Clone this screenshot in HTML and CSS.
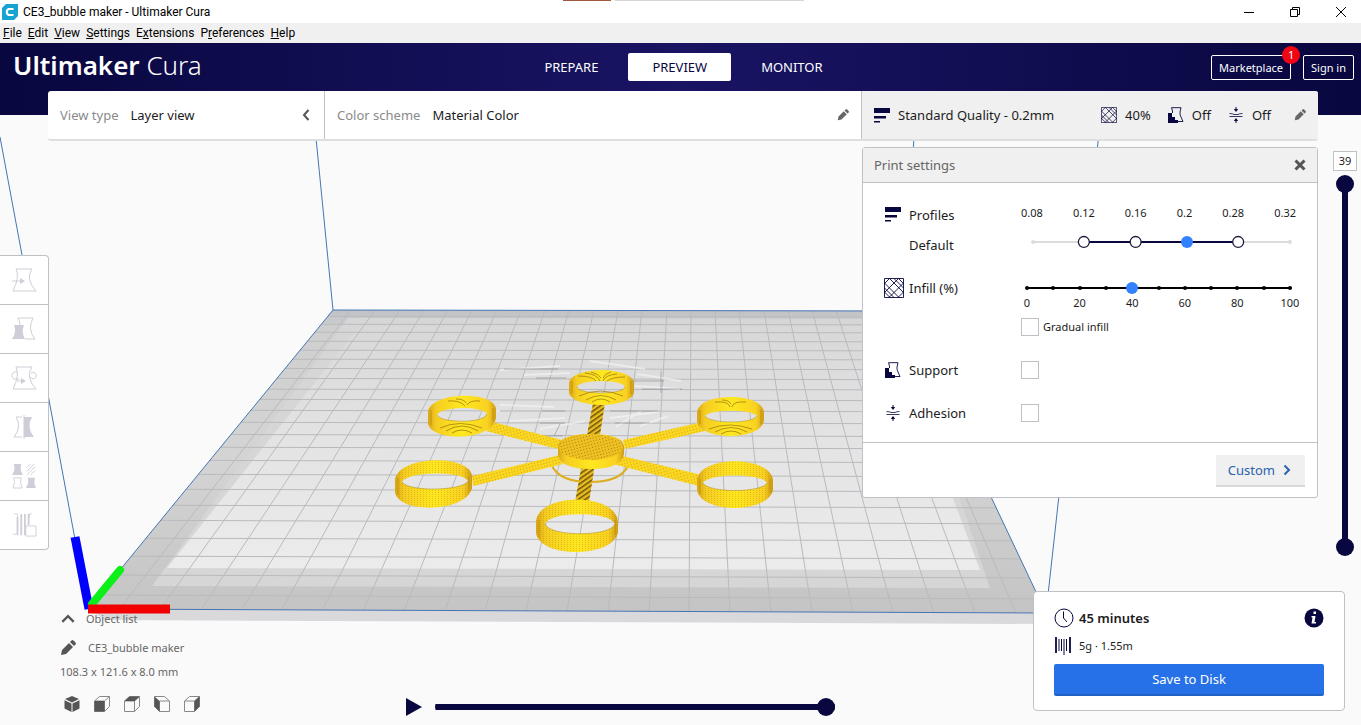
FILE: index.html
```html
<!DOCTYPE html>
<html lang="en">
<head>
<meta charset="utf-8">
<title>CE3_bubble maker - Ultimaker Cura</title>
<link rel="stylesheet" href="styles.css">
</head>
<body>
<svg class="defs" width="0" height="0" aria-hidden="true">
  <symbol id="pencil" viewBox="0 0 16 16"><path d="M1 15l1-5 7-7 4 4-7 7zM10 2l1.500-1.500q1-.8 2 0l2 2q.8 1 0 2L14 6z"/></symbol>
  <symbol id="layers" viewBox="0 0 16 16"><path d="M0 1h16v5H0zM0 9h12v2.500H0zM0 14h6v1.500H0z"/></symbol>
  <symbol id="infill" viewBox="0 0 20 20"><path fill="none" stroke="currentColor" stroke-width=".9" d="M.5.5h19v19H.5zM.5 5L15 19.500M.5 14L6 19.500M5.500.5l14 14M14.500.5l5 5M.5 10L10 19.500M10 .5l9.500 9.500M5.500.5l-5 5M14.500.5l-14 14M19.500 5L5 19.500M19.500 14L14 19.500"/></symbol>
  <symbol id="support" viewBox="0 0 16 16"><path d="M0 6h4v4h3v3h3v3H0z"/><path fill="none" stroke="currentColor" stroke-width=".9" d="M4.500 6V4L3.500.7h9.500l-1 4.300q-.3 3 1 5l2 4.500H10"/></symbol>
  <symbol id="adhesion" viewBox="0 0 16 16"><path d="M7.500 0h1v2h1.700L8 5 5.800 2h1.700zM7.500 16h1v-2h1.700L8 11l-2.200 3h1.700z"/><path fill="none" stroke="currentColor" stroke-width=".8" d="M1.500 6.500q3 0 4.500 1h4q1.500-1 4.500-1M1.500 9.500h13"/></symbol>
</svg>
<div class="app">
  <header class="titlebar">
    <svg class="app-icon" viewBox="0 0 16 16"><path fill="#16a3d2" d="M4 0h12v12l-4 4H0V4z"/><path fill="none" stroke="#fff" stroke-width="2.200" d="M11.500 5H6.500L5 6.500v3L6.500 11h5"/></svg>
    <h1 class="window-title">CE3_bubble maker - Ultimaker Cura</h1>
    <span class="tab-strip"><i class="strip-warm"></i><i class="strip-grey"></i></span>
    <div class="window-buttons">
      <button aria-label="Minimize"><svg viewBox="0 0 12 12"><path d="M1 6.500h10"/></svg></button>
      <button aria-label="Restore"><svg viewBox="0 0 12 12"><path d="M1.500 3.500h7v7h-7zM3.500 3V1.500h7v7H9"/></svg></button>
      <button aria-label="Close"><svg viewBox="0 0 12 12"><path d="M1 1l10 10M11 1L1 11"/></svg></button>
    </div>
  </header>
  <nav class="menubar">
    <button><u>F</u>ile</button><button><u>E</u>dit</button><button><u>V</u>iew</button><button><u>S</u>ettings</button><button>E<u>x</u>tensions</button><button>P<u>r</u>eferences</button><button><u>H</u>elp</button>
  </nav>

  <main class="workspace">
    <svg class="scene" viewBox="0 43 1361 682" preserveAspectRatio="xMidYMin slice" role="img" aria-label="Build plate with sliced model">
      <defs>
        <clipPath id="plate"><path d="M333 310L903 311L1046 613L88 609z"/></clipPath>
        <linearGradient id="inner" x1="0" y1="0" x2="0" y2="1"><stop offset="0" stop-color="#d8d8d9"/><stop offset=".45" stop-color="#e3e3e4"/><stop offset="1" stop-color="#ececec"/></linearGradient>
        <linearGradient id="outer" x1="0" y1="0" x2="0" y2="1"><stop offset="0" stop-color="#bfc2c6"/><stop offset=".06" stop-color="#cfcfd0"/><stop offset=".5" stop-color="#d4d4d5"/><stop offset="1" stop-color="#c4c4c4"/></linearGradient>
        <linearGradient id="wall"><stop offset="0" stop-color="#d9a514"/><stop offset=".12" stop-color="#f5cd22"/><stop offset=".5" stop-color="#ffe81f"/><stop offset=".88" stop-color="#f9d122"/><stop offset="1" stop-color="#cf9b16"/></linearGradient>
        <pattern id="fine" width="3" height="2" patternUnits="userSpaceOnUse"><path fill="#c08c08" d="M0 0h1v1H0z"/></pattern>
        <pattern id="dots" width="3" height="3" patternUnits="userSpaceOnUse" patternTransform="rotate(-15)"><path fill="#8d6608" d="M0 0h1v1H0z"/></pattern>
        <pattern id="rope" width="6" height="4" patternUnits="userSpaceOnUse" patternTransform="rotate(-35)"><path fill="#6b5208" d="M0 0h6v1.500H0z"/></pattern>
      </defs>
      <path fill="#d9d9dc" d="M88 609L1046 613V624L105 620z"/>
      <path fill="url(#outer)" d="M333 310L903 311L1046 613L88 609z"/>
      <path fill="#d6d6d7" d="M348 318L899 319L990 588L152 586z"/>
      <path fill="url(#inner)" d="M360 326L888 326L980 570L167 568z"/>
      <g clip-path="url(#plate)" fill="none" stroke="#b9babd">
        <path d="M351 310L118 611M375 310L159 611M400 310L200 611M424 310L241 611M448 310L281 611M472 310L322 611M497 310L363 611M521 310L404 611M545 310L445 611M569 310L485 611M594 310L526 611M618 310L567 611M642 310L608 611M667 310L649 612M691 310L689 612M715 310L730 612M739 310L771 612M764 310L812 612M788 310L853 612M812 310L893 613M836 310L934 613M861 310L975 613M885 310L1016 613"/>
        <path d="M80 316L1060 317M80 324L1060 325M80 332L1060 333M80 341L1060 342M80 350L1060 351M80 359L1060 360M80 368L1060 370M80 378L1060 380M80 389L1060 390M80 399L1060 401M80 410L1060 412M80 422L1060 424M80 434L1060 437M80 447L1060 449M80 460L1060 463M80 474L1060 477M80 489L1060 492M80 505L1060 508M80 520L1060 524M80 538L1060 541M80 556L1060 559M80 575L1060 578M80 595L1060 599"/>
      </g>
      <path fill="none" stroke="#4675b3" d="M333 310L88 609L1046 613L903 311zM333 310L316 138M903 311L914 138M1046 613L1101 115M88 609L0 137"/>
      <g fill="none" stroke="#f4f4f5" stroke-width="2" opacity=".65"><path d="M500 370l60-4M524 375l46-2M590 361l55 8M637 374l44 7M635 386l45 3M494 411l48 0M510 421l55-3M540 429l45-8M610 418l48-6M616 427l25-16M640 426l28-10M500 405l54 2"/></g>
      <g fill="none" stroke="#85898e" stroke-width=".6"><path d="M504 369h54M536 378h30M632 381h32M642 389h40M500 411h65M610 411h48M540 423h25M615 423h35M661 371v22M560 424l-6 12M510 436h53"/></g>
      <g fill="none" stroke-width="8"><path stroke="#00f" stroke-width="9" d="M75 537L89 609"/><path stroke="#0cf01a" stroke-linecap="round" d="M92 604L120 570"/><path stroke="#f20000" stroke-width="9" d="M88 609H170"/></g>

      <g class="model">
        <path fill="none" stroke="#dcae1b" stroke-width="2" d="M552 466Q560 482 590 482T628 466"/>
        <path fill="#fbd722" d="M493 422L562 440L558 449L486 431zM623 440L698 423L705 431L625 449zM560 455L472 476L473 486L563 464zM618 455L698 474L699 486L613 464z"/>
        <path fill="url(#dots)" opacity=".45" d="M493 422L562 440L558 449L486 431zM623 440L698 423L705 431L625 449zM560 455L472 476L473 486L563 464zM618 455L698 474L699 486L613 464z"/>
        <path fill="#e8bc22" d="M593 403L605 402L600 435L587 435zM582 463L595 463L589 502L575 502z"/>
        <path fill="url(#rope)" d="M593 403L605 402L600 435L587 435zM582 463L595 463L589 502L575 502z"/>
        <path fill="url(#wall)" d="M558 446Q560 434 591 434T624 446V454Q621 469 591 469T558 455z"/>
        <ellipse cx="591" cy="447" rx="32" ry="13" fill="#efc022"/><ellipse cx="591" cy="447" rx="32" ry="13" fill="url(#dots)" opacity=".75"/>
        <g fill-rule="evenodd" fill="url(#wall)">
          <path d="M569 383A32.500 13 0 0 1 634 383V392A32.500 13 0 0 1 569 392zM577 387a24 6 0 0 0 48 0a24 6 0 0 0-48 0z"/>
          <path d="M428 412C430 392 494 390 496 409V418C492 442 430 442 428 423zM437 415C440 423 484 424 487 414C482 406 442 406 437 415z"/>
          <path d="M697 412C700 392 762 392 764 412V421C760 441 700 441 697 421zM705 416C710 424 752 424 757 416C752 409 710 409 705 416z"/>
          <path d="M395 480C398 455 470 454 472 476V488C466 513 398 514 395 492zM402 482C408 492 463 491 468 481C463 471 408 471 402 482z"/>
          <path d="M697 480C700 455 770 455 773 480V490C768 514 701 514 697 490zM703 483C708 493 762 493 767 483C762 473 708 473 703 483z"/>
          <path d="M536 522C538 492 616 492 618 522V532C614 558 540 559 536 533zM545 524C550 537 610 537 615 524C610 511 550 511 545 524z"/>
        </g>
        <path fill="none" stroke="#b98a12" d="M572 381v13M631 381v13M431 410v15M493 408v13M700 410v14M761 410v14M398 478v17M469 476v15M700 479v15M770 479v14M539 520v17M615 520v15" opacity=".8"/>
        <g fill="none" stroke="#a8891c" stroke-width=".5"><path d="M577 387a24 6 0 0 0 48 0M437 415C440 423 484 424 487 414M705 416C710 424 752 424 757 416M402 482C408 492 463 491 468 481M703 483C708 493 762 493 767 483M545 524C550 537 610 537 615 524"/></g>
        <path fill="url(#fine)" opacity=".4" fill-rule="evenodd" d="M395 480C398 455 470 454 472 476V488C466 513 398 514 395 492zM402 482C408 492 463 491 468 481C463 471 408 471 402 482zM697 480C700 455 770 455 773 480V490C768 514 701 514 697 490zM703 483C708 493 762 493 767 483C762 473 708 473 703 483zM536 522C538 492 616 492 618 522V532C614 558 540 559 536 533zM545 524C550 537 610 537 615 524C610 511 550 511 545 524z"/>
        <g fill="none" stroke="#947110" stroke-width=".7"><path d="M585 373q12 1 15 8M591 372q8 2 10 6M617 374q-12 1-14 7M611 372q-7 2-8 6M586 400q15-9 30 0M592 402q9-6 18 0M448 401q12-1 17 5M456 399q8 0 10 4M480 401q-10-1-13 4M446 431q16-10 32 0M452 433q10-6 20 0M715 402q14-1 15 5M746 402q-13-1-14 5M722 400q7 0 9 4M715 432q16-9 32 0M721 434q10-6 20 0M578 376q14 0 18 5M625 377q-13 0-18 4M579 396q21-10 44 0M440 428q20-9 42 0M709 429q20-8 43 0"/></g>
      </g>
    </svg>

    <header class="brandbar">
      <div class="brand"><strong>Ultimaker</strong> Cura</div>
      <nav class="stages"><button>PREPARE</button><button class="active">PREVIEW</button><button>MONITOR</button></nav>
      <div class="account"><button>Marketplace<span class="badge">1</span></button><button>Sign in</button></div>
    </header>

    <section class="stagebar">
      <button class="stage-item view-type"><span class="muted">View type</span><span>Layer view</span><svg class="end chevron" viewBox="0 0 8 12"><path d="M6.500 1L2 6l4.500 5"/></svg></button>
      <button class="stage-item scheme"><span class="muted">Color scheme</span><span>Material Color</span><svg class="end pen"><use href="#pencil"/></svg></button>
      <button class="stage-item quality"><svg class="ico"><use href="#layers"/></svg><span class="quality-name">Standard Quality - 0.2mm</span><svg class="ico"><use href="#infill"/></svg><span>40%</span><svg class="ico gap-before"><use href="#support"/></svg><span>Off</span><svg class="ico gap-before"><use href="#adhesion"/></svg><span>Off</span><svg class="end pen"><use href="#pencil"/></svg></button>
    </section>

    <div class="upper">
      <div class="tools">
        <button aria-label="Move"><svg viewBox="0 0 24 24"><path d="M4 1h16q-7 10 4 22H1Q8 9 4 1zM0 13h11"/><path class="solid" d="M8 10l5 3-5 3z"/></svg></button>
        <button aria-label="Scale"><svg viewBox="0 0 24 24"><path d="M6 1h15q-6 11 2 21H13M6 1q2 4 2 7"/><path class="solid" d="M2 8h10q-3 7 1 14H0q5-7 2-14z"/></svg></button>
        <button aria-label="Rotate"><svg viewBox="0 0 24 24"><path d="M4 1h16q-7 10 4 22H1Q8 9 4 1zM7 13H2q-4-3-1-6 3-3 5 0M19 7q3-2 5 1 1 4-3 5l-3-2M5 15h7"/><path class="solid" d="M9 12l5 3-5 3z"/></svg></button>
        <button aria-label="Mirror"><svg viewBox="0 0 24 24"><path d="M12 0v24M10 2H4q6 10-2 20h8"/><path class="solid" d="M12 2h8q-6 10 2 20H12z"/></svg></button>
        <button aria-label="Per model settings"><svg viewBox="0 0 26 26"><path class="solid" d="M2 0h8q-2 6 2 12H0q4-6 2-12zM17 15h8q-2 5 1 11H15q4-6 2-11z"/><path d="M2 15h8q-2 5 1 11H1q3-6 1-11zM16 4l4-4M16 8l8-8M16 12l9-9M20 12l5-5"/></svg></button>
        <button aria-label="Support blocker"><svg viewBox="0 0 26 26"><path stroke-width="2" d="M6 4v20M10 1v23M14 1v23M18 1v12"/><path d="M2 1h4v3M22 1h-3v4M1 23h4M15 14h11v11H15z"/></svg></button>
      </div>

      <section class="settings" aria-label="Print settings">
        <header class="settings-head"><h2>Print settings</h2><button aria-label="Close settings"><svg viewBox="0 0 12 12"><path d="M1.500 1.500l9 9M10.500 1.500l-9 9"/></svg></button></header>
        <div class="settings-body">
          <div class="row">
            <svg class="ico"><use href="#layers"/></svg>
            <div class="labels"><label for="profile">Profiles</label><span>Default</span></div>
            <div class="control">
              <div class="values"><span>0.08</span><span>0.12</span><span>0.16</span><span>0.2</span><span>0.28</span><span>0.32</span></div>
              <div class="range profile-range">
                <svg viewBox="0 0 270 18"><path stroke="#dcdcdc" stroke-width="2" d="M6 9H264"/><path stroke="#08073f" stroke-width="2" d="M57 9H212"/><g fill="#dcdcdc"><circle cx="6" cy="9" r="2"/><circle cx="264" cy="9" r="2"/></g><g fill="#fff" stroke="#1c1b3d" stroke-width="1.300"><circle cx="57" cy="9" r="5.500"/><circle cx="109" cy="9" r="5.500"/><circle cx="212" cy="9" r="5.500"/></g></svg>
                <input id="profile" type="range" min="0" max="5" value="3">
              </div>
            </div>
          </div>
          <div class="row infill-row">
            <svg class="ico large"><use href="#infill"/></svg>
            <div class="labels"><label for="infill-amount">Infill (%)</label></div>
            <div class="control">
              <div class="range infill-range">
                <svg viewBox="0 0 275 18"><path stroke="#000" stroke-width="2" d="M6 9H269"/><g fill="#000"><circle cx="6" cy="9" r="2"/><circle cx="32" cy="9" r="2"/><circle cx="59" cy="9" r="2"/><circle cx="85" cy="9" r="2"/><circle cx="138" cy="9" r="2"/><circle cx="164" cy="9" r="2"/><circle cx="190" cy="9" r="2"/><circle cx="216" cy="9" r="2"/><circle cx="243" cy="9" r="2"/><circle cx="269" cy="9" r="2"/></g></svg>
                <input id="infill-amount" type="range" min="0" max="100" step="10" value="40">
              </div>
              <div class="values percents"><span>0</span><span>20</span><span>40</span><span>60</span><span>80</span><span>100</span></div>
              <label class="gradual"><input type="checkbox">Gradual infill</label>
            </div>
          </div>
          <div class="row single"><svg class="ico"><use href="#support"/></svg><label class="labels" for="support-on">Support</label><input id="support-on" type="checkbox"></div>
          <div class="row single"><svg class="ico"><use href="#adhesion"/></svg><label class="labels" for="adhesion-on">Adhesion</label><input id="adhesion-on" type="checkbox"></div>
        </div>
        <footer class="settings-foot"><button>Custom<svg viewBox="0 0 8 12"><path d="M1.500 1.500L6 6l-4.500 4.500"/></svg></button></footer>
      </section>

      <div class="layer-slider">
        <output class="layer-number">39</output>
        <div class="layer-track">
          <input type="range" min="0" max="39" value="39" aria-label="Upper layer">
          <input type="range" min="0" max="39" value="0" aria-label="Lower layer">
        </div>
      </div>
    </div>

    <div class="lower">
      <section class="object-info">
        <button class="object-line"><svg class="up" viewBox="0 0 14 14"><path d="M2 9.500l5-5 5 5"/></svg>Object list</button>
        <button class="object-line name"><svg><use href="#pencil"/></svg>CE3_bubble maker</button>
        <p>108.3 x 121.6 x 8.0 mm</p>
        <div class="views">
          <button aria-label="3D view"><svg viewBox="0 0 16 16"><path class="full" d="M8 0l7 3-7 3.500L1 3zM.5 4.200L7.500 7.500V16l-7-3.500zM15.500 4.200L8.500 7.500V16l7-3.500z"/></svg></button>
          <button aria-label="Front view"><svg viewBox="0 0 16 16"><path d="M.5 5l5-4.500h10v10l-5 5H.5zM.5 5h10v10.500M10.500 5l5-4.500"/><path class="full" d="M.5 5h10v10.500H.5z"/></svg></button>
          <button aria-label="Top view"><svg viewBox="0 0 16 16"><path d="M.5 5l5-4.500h10v10l-5 5H.5zM.5 5h10v10.500M10.500 5l5-4.500"/><path class="full" d="M.5 5l5-4.500h10l-5 4.500z"/></svg></button>
          <button aria-label="Left view"><svg viewBox="0 0 16 16"><path d="M.5.5h10l5 4.500v10.500h-10l-5-5zM5.500 5h10M5.500 5v10.500"/><path class="full" d="M.5.5l5 4.500v10.500l-5-5z"/></svg></button>
          <button aria-label="Right view"><svg viewBox="0 0 16 16"><path d="M.5 5l5-4.500h10v10l-5 5H.5zM.5 5h10v10.500M10.500 5l5-4.500"/><path class="full" d="M10.500 5l5-4.500v10l-5 5z"/></svg></button>
        </div>
      </section>
      <div class="player"><button aria-label="Play"><svg viewBox="0 0 16 18"><path d="M0 0l16 9-16 9z"/></svg></button><input type="range" min="0" max="100" value="100" aria-label="Simulation progress"></div>
      <section class="output-card">
        <div class="estimate"><svg viewBox="0 0 20 20"><circle cx="10" cy="10" r="9"/><path d="M9.500 3.500V10l3.500 4"/></svg><strong>45 minutes</strong><button aria-label="Print details"><svg viewBox="0 0 20 20"><circle cx="10" cy="10" r="9.500"/><path fill="#fff" d="M9.500 3.500h2.500v2.500H9.500zM7.500 8h4l-1 6h1.500v1.500H7.500L8.500 9.500h-1z"/></svg></button></div>
        <div class="material"><svg viewBox="0 0 16 18"><path stroke-width="1.800" d="M1 0v16M15 0v16"/><path d="M4 2v12M6.500 2v12M9 2v16M11.500 2v12"/></svg>5g · 1.55m</div>
        <button class="save">Save to Disk</button>
      </section>
    </div>
  </main>
</div>
</body>
</html>
```
FILE: styles.css
```css
* { box-sizing: border-box; }
html, body { height: 100%; }
body { margin: 0; font: 13px/20px "Noto Sans", sans-serif; color: #1c1c1c; }
button { font: inherit; color: inherit; background: none; border: 0; padding: 0; margin: 0; cursor: pointer; }
input { margin: 0; }
h1, h2, p { margin: 0; font: inherit; }
svg { display: block; flex: none; }
.defs { position: absolute; }
.app { min-height: 100%; display: flex; flex-direction: column; background: #fafafa; }

/* Window frame */
.titlebar { position: relative; height: 23px; display: flex; align-items: center; padding-left: 2px; background: #fff; color: #000; font: 12px/16px Roboto, "Noto Sans", sans-serif; overflow: hidden; }
.app-icon { width: 16px; height: 16px; margin-right: 5px; }
.window-buttons { margin: 0 -3px 0 auto; display: flex; }
.window-buttons button { width: 46px; height: 21px; display: grid; place-items: center; }
.window-buttons svg { width: 12px; height: 12px; fill: none; stroke: #000; }
.tab-strip { position: absolute; top: 0; left: 563px; display: flex; gap: 4px; }
.tab-strip i { height: 1px; }
.strip-warm { width: 48px; background: #a0583c; }
.strip-grey { width: 189px; background: #d6d6d6; }
.menubar { height: 20px; display: flex; gap: 6px; padding-left: 3px; background: #f0f0f0; color: #000; font: 12px/20px Roboto, "Noto Sans", sans-serif; }

/* Brand header */
.workspace { position: relative; flex: 1; display: flex; flex-direction: column; overflow: hidden; }
.scene { position: absolute; inset: 0; width: 100%; height: 100%; }
.brandbar { position: relative; height: 72px; display: grid; grid-template-columns: 1fr auto 1fr; align-items: start; padding: 10px 7px 0 13px; color: #fff; background: linear-gradient(90deg, #08073f, #191463 50%, #08073f); }
.brand { font-size: 26px; line-height: 24px; font-weight: 300; }
.brand strong { font-weight: 600; }
.stages { display: flex; gap: 6px; }
.stages button { height: 28px; padding: 0 24px; border-radius: 2px; }
.stages .active { background: #fff; color: #08073f; }
.account { display: flex; justify-content: flex-end; gap: 12px; margin-top: 2px; font-size: 11px; }
.account button { position: relative; height: 25px; padding: 0 7px; border: 1px solid #fff; border-radius: 2px; }
.badge { position: absolute; right: -10px; top: -10px; width: 18px; height: 18px; border-radius: 9px; background: #f00514; font-size: 11px; line-height: 18px; }

/* Stage bar */
.stagebar { position: relative; display: flex; height: 50px; margin: -24px 43px 0 48px; background: #fff; border-bottom: 2px solid #dedede; border-radius: 3px; overflow: hidden; }
.stage-item { display: flex; align-items: center; gap: 12px; padding: 0 12px; text-align: left; }
.view-type { width: 277px; border-right: 1px solid #c0c1c6; }
.scheme { flex: 1; }
.quality { width: 457px; gap: 8px; background: #f0f0f0; border-left: 1px solid #c0c1c6; }
.muted { color: #8a8a8a; }
.end { margin-left: auto; }
.pen { width: 12px; height: 12px; fill: #666; }
.chevron { width: 8px; height: 12px; margin-right: 2px; fill: none; stroke: #555; stroke-width: 2; }
.ico { width: 16px; height: 16px; fill: #08073f; color: #08073f; }
.ico.large { width: 20px; height: 20px; }
.quality-name { margin-right: auto; }
.gap-before { margin-left: 9px; }
.quality .end { margin-left: 15px; }

/* Tools, settings, layer slider */
.upper { position: relative; flex: 1; display: flex; align-items: flex-start; padding-right: 4px; }
.tools { width: 49px; margin: 114px auto 0 0; background: #fff; border: 1px solid #c0c1c6; border-left: 0; border-radius: 0 4px 4px 0; }
.tools button { width: 100%; height: 49px; display: grid; place-items: center; border-bottom: 1px solid #c0c1c6; }
.tools button:last-child { height: 48px; border-bottom: 0; }
.tools svg { width: 24px; height: 24px; fill: none; stroke: #cfced8; overflow: visible; }
.tools .solid { fill: #cfced8; stroke: none; }
.settings { width: 456px; margin-top: 6px; background: #fff; border: 1px solid #c0c1c6; border-radius: 3px; }
.settings-head { height: 35px; display: flex; align-items: center; justify-content: space-between; padding: 0 11px; background: #f0f0f0; border-bottom: 1px solid #c0c1c6; color: #666; }
.settings-head svg { width: 12px; height: 12px; fill: none; stroke: #555; stroke-width: 3; }
.settings-body { display: flex; flex-direction: column; gap: 19px; padding: 20px 21px 17px; }
.row { display: grid; grid-template-columns: 25px 112px 1fr; align-items: start; }
.row > .ico { margin: 3px 0 0 1px; }
.row > .ico.large { margin: 2px 0 0; }
.labels { display: grid; gap: 6px; line-height: 24px; }
.values { display: flex; justify-content: space-between; font-size: 11px; line-height: 20px; }
.range { display: grid; align-items: center; height: 18px; }
.range > * { grid-area: 1 / 1; width: 100%; }
.profile-range { margin: 10px 0 0 6px; }
.infill-row { padding-bottom: 3px; }
.infill-range { margin-top: 3px; height: 18px; }
.percents { margin: 0 -4px; line-height: 12px; }
.percents span { width: 20px; display: flex; justify-content: center; }
.gradual { display: flex; align-items: center; gap: 4px; margin-top: 9px; font-size: 11px; line-height: 18px; }
input[type="checkbox"] { appearance: none; width: 18px; height: 18px; background: #fff; border: 1px solid #c0c1c6; }
.single { align-items: center; }
.single > .ico { margin-top: 0; }
input[type="range"] { appearance: none; background: transparent; height: 18px; }
.range input::-webkit-slider-thumb { appearance: none; width: 12px; height: 12px; border-radius: 6px; background: #3282ff; }
.settings-foot { display: flex; justify-content: flex-end; padding: 12px 12px 10px; border-top: 1px solid #c0c1c6; }
.settings-foot button { display: flex; align-items: center; gap: 8px; height: 32px; padding: 0 14px 0 12px; background: #f0f0f0; border-bottom: 2px solid #d8d8d8; color: #2a62ae; }
.settings-foot svg { width: 8px; height: 12px; fill: none; stroke: #2a62ae; stroke-width: 2; }
.layer-slider { width: 24px; margin: 10px 0 0 15px; display: flex; flex-direction: column; align-items: center; gap: 4px; }
.layer-number { width: 24px; text-align: center; background: #fff; border: 1px solid #c0c1c6; font-size: 11px; line-height: 18px; }
.layer-track { display: grid; justify-items: center; height: 381px; background: linear-gradient(#08073f, #08073f) center / 6px calc(100% - 18px) no-repeat; }
.layer-track input { grid-area: 1 / 1; width: 18px; height: 100%; writing-mode: vertical-lr; direction: rtl; pointer-events: none; }
.layer-track input::-webkit-slider-thumb, .player input::-webkit-slider-thumb { appearance: none; width: 18px; height: 18px; border-radius: 9px; background: #08073f; pointer-events: auto; }

/* Bottom row */
.lower { position: relative; display: grid; grid-template-columns: 208px 1fr auto; align-items: end; padding: 0 16px 14px 0; }
.object-info { padding-left: 60px; color: #666; font-size: 11px; white-space: nowrap; }
.object-line { display: flex; align-items: center; gap: 10px; height: 20px; }
.object-line svg { width: 16px; height: 16px; fill: #555; }
.object-line.name { margin: 9px 0 4px; gap: 12px; }
.object-line .up { fill: none; stroke: #555; stroke-width: 2; }
.views { display: flex; gap: 14px; margin: 14px 0 -1px 4px; }
.views svg { width: 16px; height: 16px; fill: none; stroke: #888; }
.views .full { fill: #555; stroke: none; }
.player { justify-self: center; width: 429px; display: flex; align-items: center; gap: 13px; margin-bottom: -5px; }
.player svg { width: 16px; height: 18px; fill: #08073f; }
.player input { flex: 1; background: linear-gradient(#08073f, #08073f) center / 100% 6px no-repeat; border-radius: 9px; }
.output-card { width: 312px; height: 120px; padding: 16px 20px; background: #fff; border: 1px solid #c0c1c6; border-radius: 4px; }
.estimate { display: flex; align-items: center; gap: 5px; height: 20px; }
.estimate strong { font-weight: 600; }
.estimate svg { width: 20px; height: 20px; }
.estimate > svg { fill: none; stroke: #08073f; stroke-width: 1; }
.estimate button { margin-left: auto; }
.estimate circle { fill: inherit; }
.estimate button svg { fill: #08073f; }
.material { display: flex; align-items: center; gap: 8px; margin: 8px 0; padding-left: 1px; font-size: 11px; }
.material svg { width: 16px; height: 18px; fill: none; stroke: #08073f; }
.save { width: 100%; height: 32px; background: #2671e7; border-bottom: 2px solid #2262c4; border-radius: 2px; color: #fff; }
```
